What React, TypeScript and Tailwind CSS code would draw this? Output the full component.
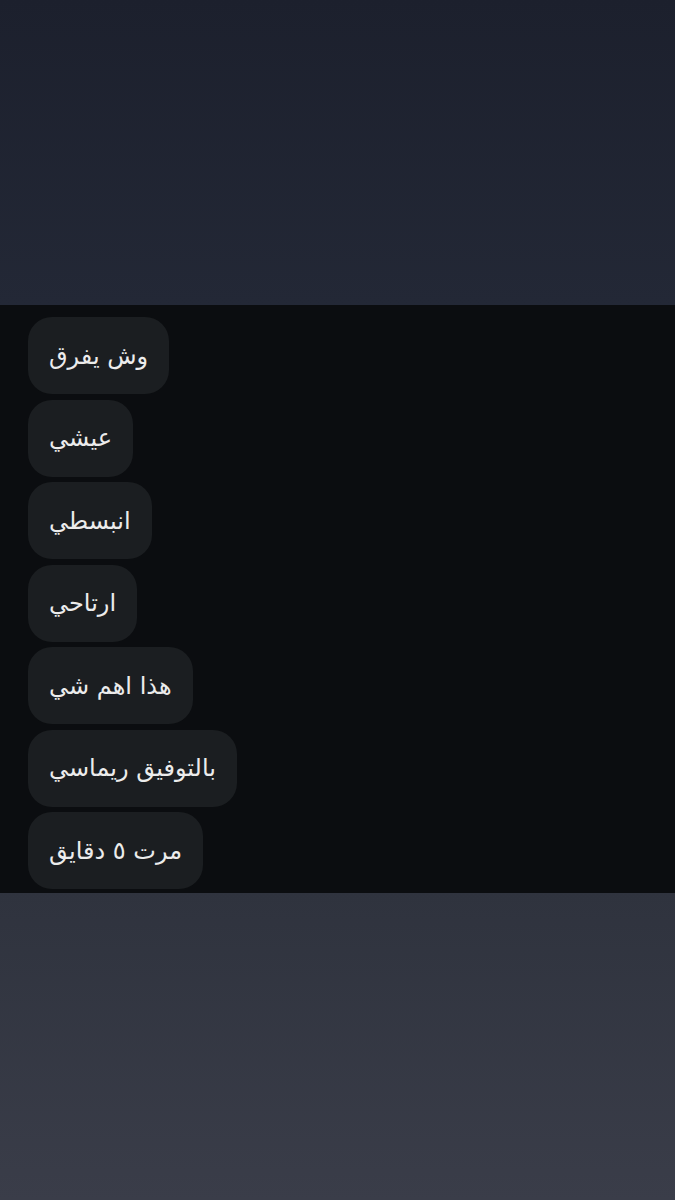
const messages = [
  "وش يفرق",
  "عيشي",
  "انبسطي",
  "ارتاحي",
  "هذا اهم شي",
  "بالتوفيق ريماسي",
  "مرت ٥ دقايق",
];

export default function App() {
  return (
    <div className="w-[675px] h-[1200px] flex flex-col font-['DejaVu_Sans',sans-serif]">
      {/* top backdrop */}
      <div className="h-[305px] bg-gradient-to-b from-[#1c202d] to-[#232836]" />

      {/* message list */}
      <div dir="rtl" className="h-[588px] bg-[#0b0d10] pt-[12px] pl-[28px] flex flex-col items-end gap-[5.5px]">
        {messages.map((m) => (
          <div
            key={m}
            className="h-[77px] px-[21px] rounded-[24px] bg-[#1b1e21] text-[#ececec] text-[24px] flex items-center"
          >
            {m}
          </div>
        ))}
      </div>

      {/* bottom backdrop */}
      <div className="flex-1 bg-gradient-to-b from-[#2f333e] to-[#3a3d49]" />
    </div>
  );
}
